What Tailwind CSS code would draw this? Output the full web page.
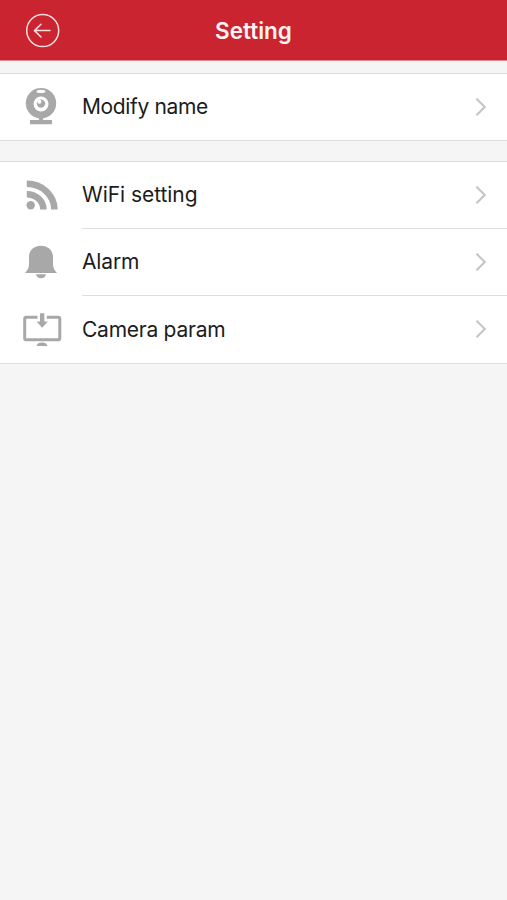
<!DOCTYPE html>
<html lang="en">
<head>
  <meta charset="UTF-8" />
  <meta name="viewport" content="width=device-width, initial-scale=1" />
  <title>Setting</title>
  <script src="https://cdn.jsdelivr.net/npm/@tailwindcss/browser@4"></script>
</head>
<body class="min-h-screen bg-[#f5f5f5] font-['Inter','Liberation_Sans',sans-serif] text-[#1c1c1c]">

  <header class="grid h-[61px] grid-cols-[82px_1fr_82px] items-center border-b border-[#dc8a90] bg-[#c92430]">
    <button class="pl-[25px]" aria-label="Back">
      <svg class="block h-[35px] w-[35px]" viewBox="0 0 35 35" fill="none" stroke="#fbdfe1" stroke-width="1.5" stroke-linecap="round" stroke-linejoin="round">
        <circle cx="17.7" cy="17.6" r="16" />
        <path d="M25 17.6H9.8M16 11.2L9.5 17.6L16 24" />
      </svg>
    </button>
    <h1 class="pt-0.5 text-center text-[22.5px] leading-7 font-semibold text-[#fff3f3]">Setting</h1>
  </header>

  <main>
    <section class="mt-3 border-y border-[#dedede] bg-white">
      <a href="#" class="flex h-[66px] items-center">
        <span class="w-[82px] shrink-0">
          <svg class="block h-[66px] w-[82px]" viewBox="0 74 82 66" fill="#a8a8a8">
            <circle cx="41" cy="103.3" r="15.2" />
            <ellipse cx="41" cy="91.4" rx="4.4" ry="1.6" fill="#fff" />
            <circle cx="41" cy="104" r="7.5" fill="#fff" />
            <circle cx="41" cy="103.6" r="4.2" />
            <circle cx="39.4" cy="101.8" r="2" fill="#fff" />
            <path d="M39 117h4v3h9v4.2H30V120h9z" />
          </svg>
        </span>
        <span class="flex-1 pb-px text-[21px] leading-7 tracking-[-0.35px]">Modify name</span>
        <svg class="mr-5 h-5 w-3" viewBox="0 0 12 20" fill="none" stroke="#c4c4c6" stroke-width="2"><path d="M1.5 1.8L9.8 10L1.5 18.2" /></svg>
      </a>
    </section>

    <section class="mt-5 border-y border-[#dedede] bg-white">
      <a href="#" class="flex h-[67px] items-center">
        <span class="w-[82px] shrink-0">
          <svg class="block h-[67px] w-[82px]" viewBox="0 162 82 67" fill="none" stroke="#a8a8a8" stroke-width="6.6">
            <circle cx="30.7" cy="205.2" r="4.2" fill="#a8a8a8" stroke="none" />
            <path d="M26.8 194.2A16.6 15.2 0 0 1 43.400 209.400M26.800 183.800A27.600 25.600 0 0 1 54.400 209.400" />
          </svg>
        </span>
        <span class="flex h-full flex-1 items-center border-b border-[#dedede]">
          <span class="flex-1 pb-px text-[21px] leading-7 tracking-[-0.05px]">WiFi setting</span>
          <svg class="mr-5 h-5 w-3" viewBox="0 0 12 20" fill="none" stroke="#c4c4c6" stroke-width="2"><path d="M1.5 1.8L9.8 10L1.5 18.2" /></svg>
        </span>
      </a>
      <a href="#" class="flex h-[67px] items-center">
        <span class="w-[82px] shrink-0">
          <svg class="block h-[67px] w-[82px]" viewBox="0 229 82 67" fill="#a8a8a8">
            <path d="M41 245.8C48 245.8 53 250.5 53 257V264C53 268 54.5 270.5 57 273H25C27.5 270.5 29 268 29 264V257C29 250.5 34 245.8 41 245.8Z" />
            <path d="M36 274.2H46C45.5 276.8 43.5 278.3 41 278.3S36.5 276.8 36 274.2Z" />
          </svg>
        </span>
        <span class="flex h-full flex-1 items-center border-b border-[#dedede]">
          <span class="flex-1 text-[21px] leading-7 tracking-[-0.15px]">Alarm</span>
          <svg class="mr-5 h-5 w-3" viewBox="0 0 12 20" fill="none" stroke="#c4c4c6" stroke-width="2"><path d="M1.5 1.8L9.8 10L1.5 18.2" /></svg>
        </span>
      </a>
      <a href="#" class="flex h-[67px] items-center">
        <span class="w-[82px] shrink-0">
          <svg class="block h-[67px] w-[82px]" viewBox="0 296 82 67" fill="#a8a8a8">
            <path d="M37.5 317.2H26.3Q24.7 317.2 24.7 318.8V338.2Q24.7 339.8 26.3 339.8H58.2Q59.8 339.8 59.8 338.2V318.8Q59.8 317.2 58.2 317.2H46.8" fill="none" stroke="#a8a8a8" stroke-width="3" />
            <path d="M40 313.3H44.3V321.5H47.8L42.2 327.8L36.6 321.5H40Z" />
            <path d="M36.5 346C37.2 343.5 39 342.5 42 342.5S46.8 343.5 47.5 346Z" />
          </svg>
        </span>
        <span class="flex-1 text-[21px] leading-7 tracking-[-0.25px]">Camera param</span>
        <svg class="mr-5 mb-px h-5 w-3" viewBox="0 0 12 20" fill="none" stroke="#c4c4c6" stroke-width="2"><path d="M1.5 1.8L9.8 10L1.5 18.2" /></svg>
      </a>
    </section>
  </main>

</body>
</html>
